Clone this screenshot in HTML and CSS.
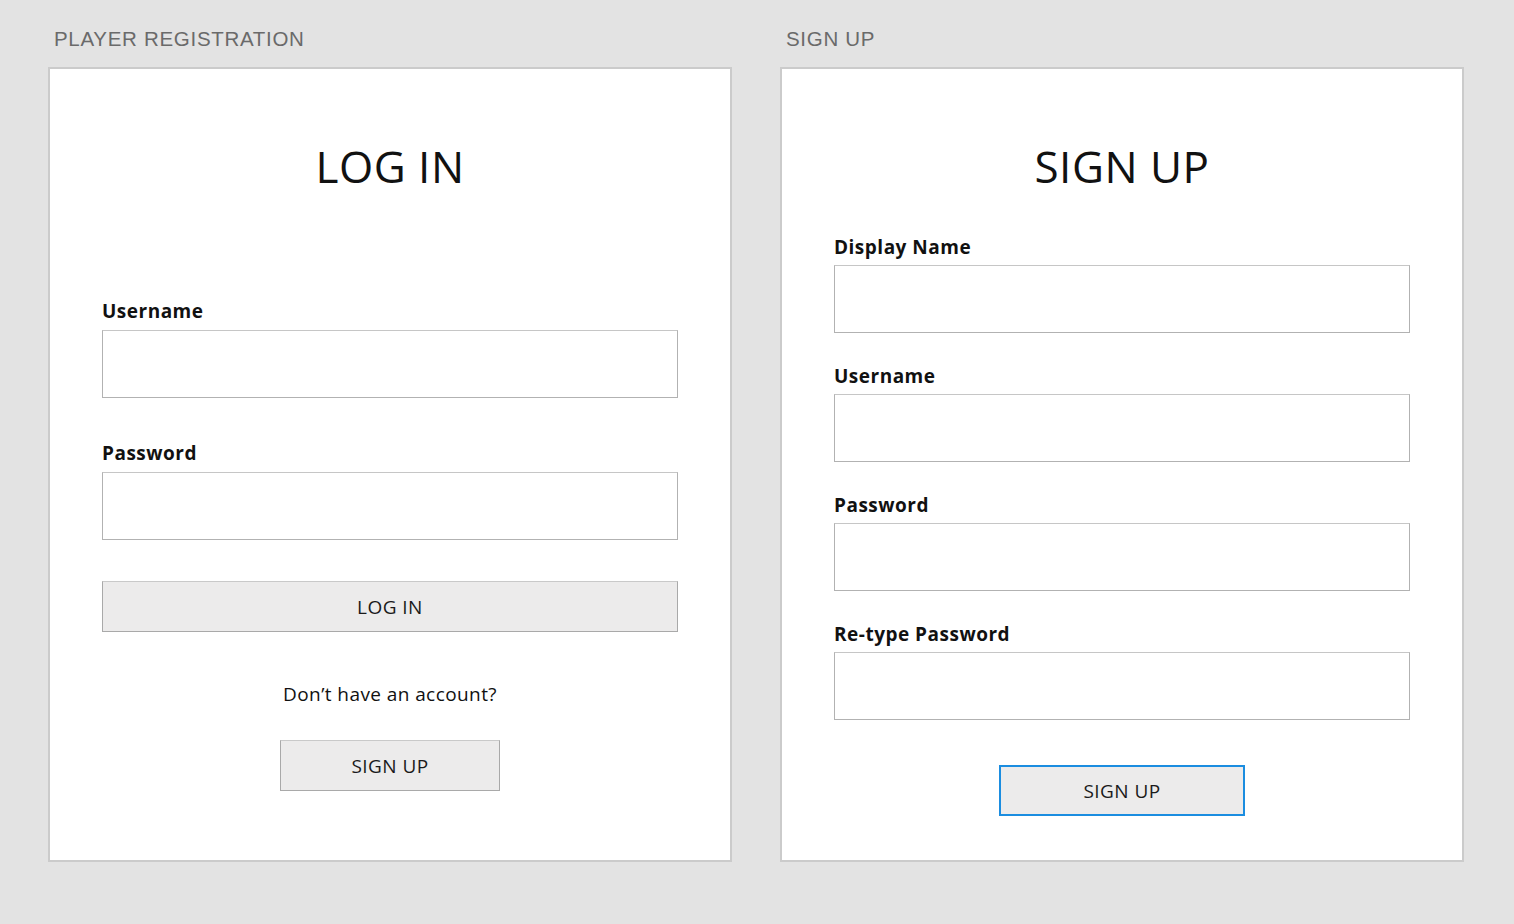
FILE: index.html
```html
<!DOCTYPE html>
<html lang="en">
<head>
<meta charset="utf-8">
<title>Player Registration</title>
<link rel="stylesheet" href="styles.css">
</head>
<body>
<main class="board">
  <section class="column">
    <h2 class="frame-label">PLAYER REGISTRATION</h2>
    <div class="panel panel-login">
      <h1 class="title">LOG IN</h1>
      <div class="login-fields">
        <div class="field">
          <label class="field-label" for="lu">Username</label>
          <input class="field-input" id="lu" type="text">
        </div>
        <div class="field">
          <label class="field-label" for="lp">Password</label>
          <input class="field-input" id="lp" type="password">
        </div>
      </div>
      <button class="btn btn-wide" type="button">LOG IN</button>
      <p class="prompt">Don’t have an account?</p>
      <button class="btn btn-small" type="button">SIGN UP</button>
    </div>
  </section>
  <section class="column">
    <h2 class="frame-label">SIGN UP</h2>
    <div class="panel panel-signup">
      <h1 class="title">SIGN UP</h1>
      <div class="signup-fields">
        <div class="field">
          <label class="field-label" for="sd">Display Name</label>
          <input class="field-input" id="sd" type="text">
        </div>
        <div class="field">
          <label class="field-label" for="su">Username</label>
          <input class="field-input" id="su" type="text">
        </div>
        <div class="field">
          <label class="field-label" for="sp">Password</label>
          <input class="field-input" id="sp" type="password">
        </div>
        <div class="field">
          <label class="field-label" for="sr">Re-type Password</label>
          <input class="field-input" id="sr" type="password">
        </div>
      </div>
      <button class="btn btn-focus" type="button">SIGN UP</button>
    </div>
  </section>
</main>
</body>
</html>
```

FILE: styles.css
```css
* {
  box-sizing: border-box;
}

html, body {
  margin: 0;
  padding: 0;
}

body {
  background: #e3e3e3;
  font-family: "Open Sans", "DejaVu Sans", sans-serif;
  color: #111;
  width: 1514px;
  height: 924px;
  overflow: hidden;
}

.board {
  display: flex;
  gap: 48px;
  padding: 27px 0 0 48px;
}

.column {
  width: 684px;
  display: flex;
  flex-direction: column;
}

.frame-label {
  margin: 0 0 16px 6px;
  font-family: "Liberation Sans", Arial, sans-serif;
  font-weight: 400;
  font-size: 20.5px;
  line-height: 24px;
  letter-spacing: 0.7px;
  color: #6a6a6a;
}

.panel {
  height: 795px;
  background: #fff;
  border: 2px solid #cbcbcb;
  padding: 67px 52px 0;
  display: flex;
  flex-direction: column;
  align-items: center;
}

.title {
  margin: 0;
  font-weight: 400;
  font-size: 44px;
  line-height: 60px;
  letter-spacing: 0.5px;
  color: #111;
  text-align: center;
}

.field {
  display: flex;
  flex-direction: column;
  width: 576px;
}

.field-label {
  font-weight: 700;
  font-size: 19px;
  line-height: 24px;
  letter-spacing: 0.5px;
  color: #111;
}

.field-input {
  display: block;
  width: 576px;
  height: 68px;
  margin: 0;
  padding: 0 12px;
  background: #fff;
  border: 1px solid #b2b2b2;
  border-top-color: #c6c6c6;
  border-radius: 0;
  font-family: inherit;
  font-size: 18px;
  outline: none;
}

.login-fields {
  margin-top: 103px;
  display: flex;
  flex-direction: column;
  gap: 43px;
}

.login-fields .field-label {
  margin-bottom: 7px;
}

.signup-fields {
  margin-top: 39px;
  display: flex;
  flex-direction: column;
  gap: 31px;
}

.signup-fields .field-label {
  margin-bottom: 6px;
}

.btn {
  height: 51px;
  margin: 0;
  padding: 0;
  background: #ecebeb;
  border: 1px solid #a9a9a9;
  border-top-color: #c9c9c9;
  border-radius: 0;
  font-family: "Open Sans", "DejaVu Sans", sans-serif;
  font-size: 19px;
  font-weight: 400;
  letter-spacing: 0.45px;
  color: #1a1a1a;
  line-height: 24px;
}

.btn-wide {
  width: 576px;
  margin-top: 41px;
}

.prompt {
  margin: 50px 0 0;
  font-size: 19px;
  line-height: 24px;
  letter-spacing: 0.42px;
  color: #111;
  text-align: center;
}

.btn-small {
  width: 220px;
  margin-top: 34px;
}

.btn-focus {
  width: 246px;
  margin-top: 45px;
  border: 2px solid #1b8de0;
}
```
